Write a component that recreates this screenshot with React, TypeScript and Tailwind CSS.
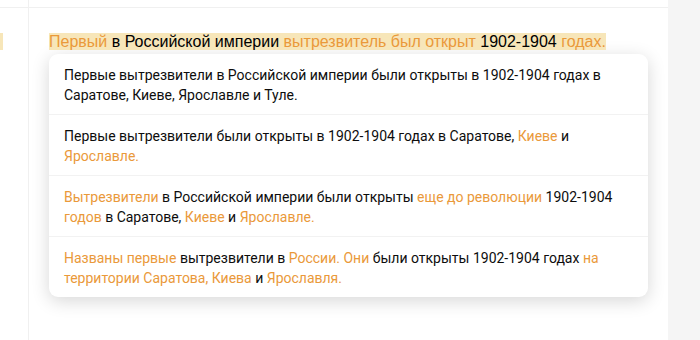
const O = "text-[#ea993a]";

type Part = [string, boolean];

const options: Part[][] = [
  [["Первые вытрезвители в Российской империи были открыты в 1902-1904 годах в Саратове, Киеве, Ярославле и Туле.", false]],
  [
    ["Первые вытрезвители были открыты в 1902-1904 годах в Саратове, ", false],
    ["Киеве", true],
    [" и ", false],
    ["Ярославле.", true],
  ],
  [
    ["Вытрезвители", true],
    [" в Российской империи были открыты ", false],
    ["еще до революции", true],
    [" 1902-1904 ", false],
    ["годов", true],
    [" в Саратове, ", false],
    ["Киеве", true],
    [" и ", false],
    ["Ярославле.", true],
  ],
  [
    ["Названы первые", true],
    [" вытрезвители в ", false],
    ["России. Они", true],
    [" были открыты 1902-1904 годах ", false],
    ["на территории Саратова, Киева", true],
    [" и ", false],
    ["Ярославля.", true],
  ],
];

export default function App() {
  return (
    <div className="flex h-[340px] w-[700px] overflow-hidden bg-white">
      <div className="flex flex-1 flex-col">
        <div className="flex h-[8px] border-b border-[#f0f0f0]">
          <div className="w-[29px] border-r border-[#f0f0f0]" />
        </div>
        <div className="flex flex-1">
          <div className="w-[29px] border-r border-[#f0f0f0] pt-[25px]">
            <div className="h-[17px] w-[3px] bg-[#f7e6b9]" />
          </div>
          <div className="flex-1 pl-[20px] pt-[25px]">
            <p className="font-['Liberation_Sans',Arial,sans-serif] text-[16px] leading-[17px] text-black">
              <span className="bg-[#f7e6b9]">
                <span className={O}>Первый</span> в Российской империи{" "}
                <span className={O}>вытрезвитель был открыт</span> 1902-1904{" "}
                <span className={O}>годах.</span>
              </span>
            </p>
            <div className="mt-[4px] w-[599px] rounded-[9px] bg-white shadow-[0_4px_18px_rgba(0,0,0,0.16)] font-['Roboto',sans-serif] text-[14px] leading-[20px] text-[#0d0d0d]">
              {options.map((parts, i) => (
                <div
                  key={i}
                  className={`px-[15px] pt-[11px] pb-[9px] ${i < options.length - 1 ? "border-b border-[#f2f2f2]" : ""}`}
                >
                  <div className="h-[40px]">
                    {parts.map(([t, hl], j) => (
                      <span key={j} className={hl ? O : ""}>
                        {t}
                      </span>
                    ))}
                  </div>
                </div>
              ))}
            </div>
          </div>
        </div>
      </div>
      <div className="w-[32px] bg-[#f5f5f5]" />
    </div>
  );
}
